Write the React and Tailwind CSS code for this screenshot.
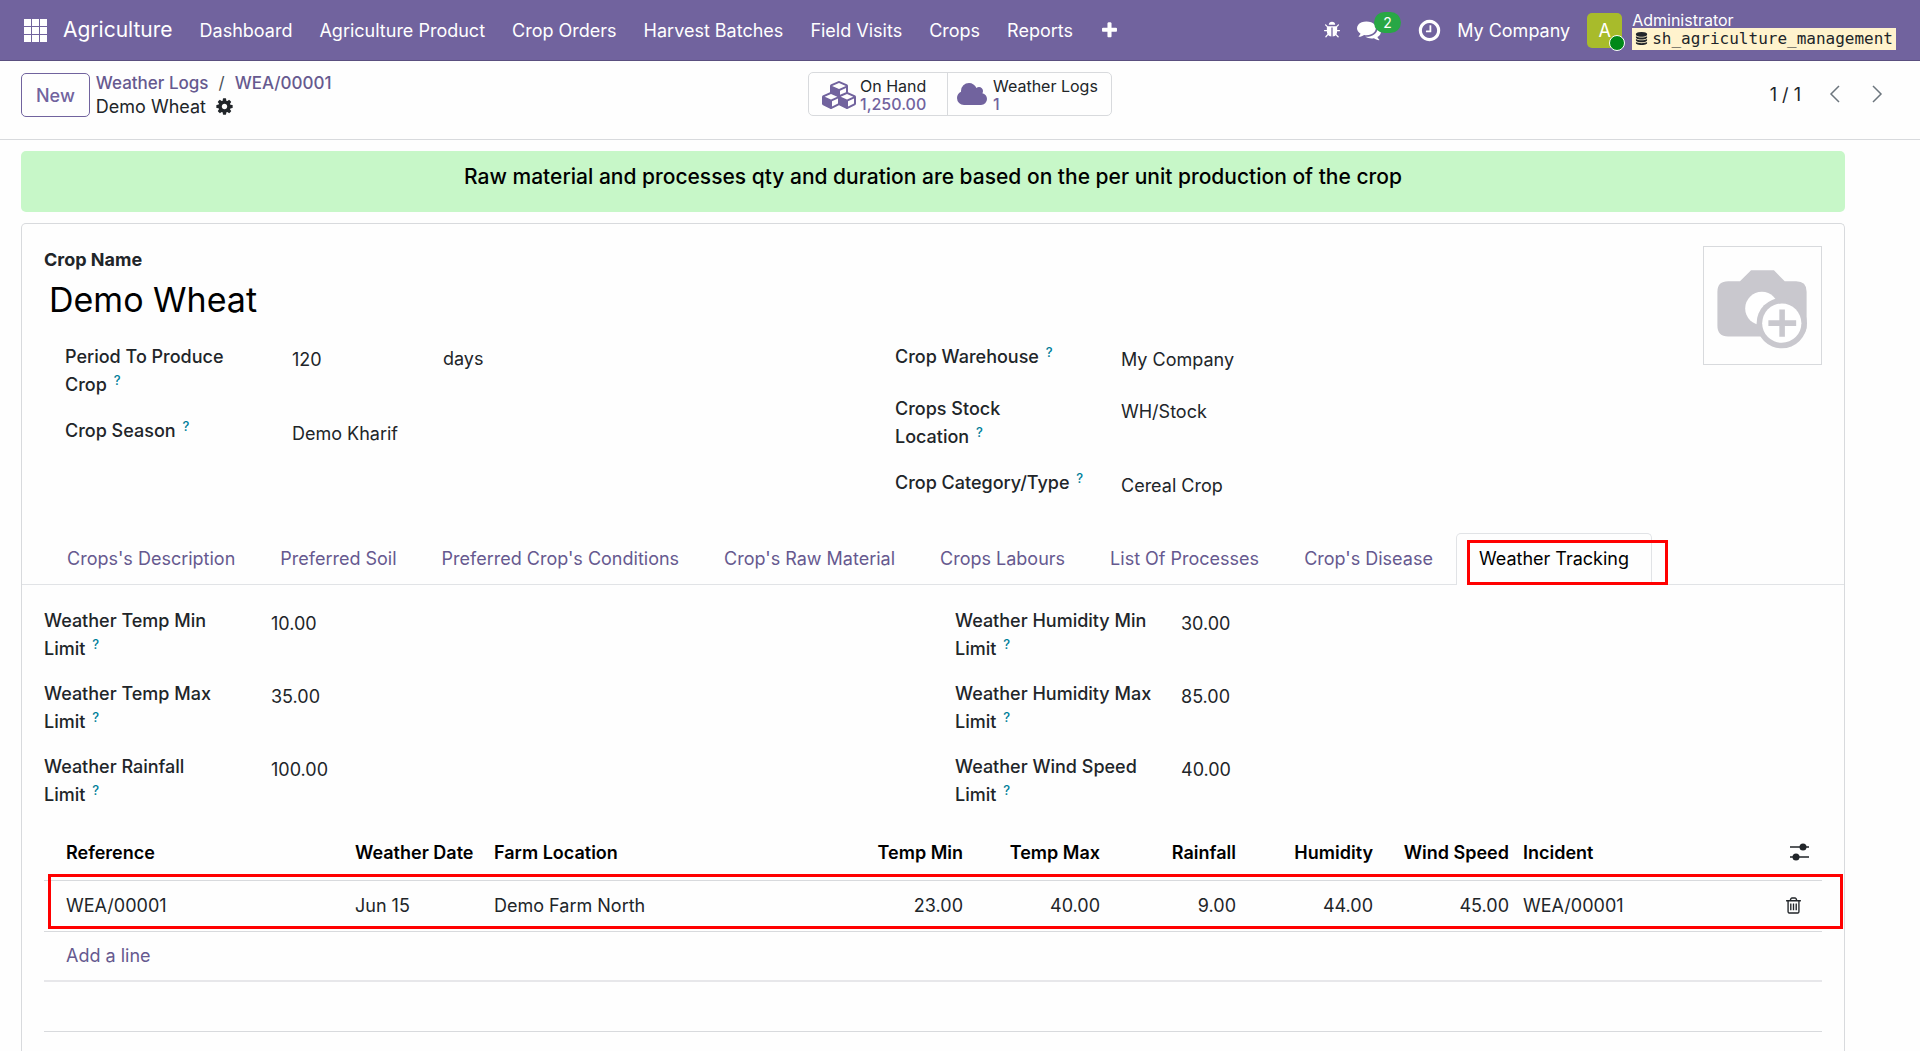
import React, { useState } from 'react';

const ICONS = {
  bug: [1792, "M1696 960q0 26-19 45t-45 19h-224q0 171-67 290l208 209q19 19 19 45t-19 45q-18 19-45 19t-45-19l-198-197q-5 5-15 13t-42 28.5-65 36.5-82 29-97 13v-896h-128v896q-51 0-101.5-13.5t-87-33-66-39-43.5-32.5l-15-14-183 207q-20 21-48 21-24 0-43-16-19-18-20.5-44.5t15.5-46.5l202-227q-58-114-58-274h-224q-26 0-45-19t-19-45 19-45 45-19h224v-294l-173-173q-19-19-19-45t19-45 45-19 45 19l173 173h844l173-173q19-19 45-19t45 19 19 45-19 45l-173 173v294h224q26 0 45 19t19 45zm-480-576h-640q0-133 93.5-226.5t226.5-93.5 226.5 93.5 93.5 226.5z"],
  comments: [1792, "M1408 768q0 139-94 257t-256.5 186.5-353.5 68.5q-86 0-176-16-124 88-278 128-36 9-86 16h-3q-11 0-20.5-8t-11.5-21q-1-3-1-6.5t.5-6.5 2-6l2.5-5 3.5-5.5 4-5 4.5-5 4-4.5q5-6 23-25t26-29.5 22.5-29 25-38.5 20.5-44q-124-72-195-177t-71-224q0-139 94-257t256.5-186.5 353.5-68.5 353.5 68.5 256.5 186.5 94 257zm384 256q0 120-71 224.5t-195 176.5q10 24 20.5 44t25 38.5 22.5 29 26 29.5 23 25q1 1 4 4.5t4.5 5 4 5 3.5 5.5l2.5 5 2 6 .5 6.5-1 6.5q-3 14-13 22t-22 7q-50-7-86-16-154-40-278-128-90 16-176 16-271 0-472-132 58 4 88 4 161 0 309-45t264-129q125-92 192-212t67-254q0-77-23-152 129 71 204 178t75 230z"],
  clock: [1792, "M1024 544v448q0 14-9 23t-23 9h-320q-14 0-23-9t-9-23v-64q0-14 9-23t23-9h224v-352q0-14 9-23t23-9h64q14 0 23 9t9 23zm416 352q0-148-73-273t-198-198-273-73-273 73-198 198-73 273 73 273 198 198 273 73 273-73 198-198 73-273zm224 0q0 209-103 385.5t-279.5 279.5-385.5 103-385.5-103-279.5-279.5-103-385.5 103-385.5 279.5-279.5 385.5-103 385.5 103 279.5 279.5 103 385.5z"],
  plus: [1792, "M1600 736v192q0 40-28 68t-68 28h-416v416q0 40-28 68t-68 28h-192q-40 0-68-28t-28-68v-416h-416q-40 0-68-28t-28-68v-192q0-40 28-68t68-28h416v-416q0-40 28-68t68-28h192q40 0 68 28t28 68v416h416q40 0 68 28t28 68z"],
  cog: [1792, "M1152 896q0-106-75-181t-181-75-181 75-75 181 75 181 181 75 181-75 75-181zm512-109v222q0 12-8 23t-20 13l-185 28q-19 54-39 91 35 50 107 138 10 12 10 25t-9 23q-27 37-99 108t-94 71q-12 0-26-9l-138-108q-44 23-91 38-16 136-29 186-7 28-36 28h-222q-14 0-24.5-8.5t-11.5-21.5l-28-184q-49-16-90-37l-141 107q-10 9-25 9-14 0-25-11-126-114-165-168-7-10-7-23 0-12 8-23 15-21 51-66.5t54-70.5q-27-50-41-99l-183-27q-13-2-21-12.5t-8-23.5v-222q0-12 8-23t19-13l186-28q14-46 39-92-40-57-107-138-10-12-10-24 0-10 9-23 26-36 98.5-107.5t94.5-71.5q13 0 26 10l138 107q44-23 91-38 16-136 29-186 7-28 36-28h222q14 0 24.5 8.5t11.5 21.5l28 184q49 16 90 37l142-107q9-9 24-9 13 0 25 10 129 119 165 170 7 8 7 22 0 12-8 23-15 21-51 66.5t-54 70.5q26 50 41 98l183 28q13 2 21 12.5t8 23.5z"],
  database: [1792, "M896 768q237 0 443-43t325-127v170q0 69-103 128t-280 93.5-385 34.5-385-34.5-280-93.5-103-128v-170q119 84 325 127t443 43zm0 768q237 0 443-43t325-127v170q0 69-103 128t-280 93.5-385 34.5-385-34.5-280-93.5-103-128v-170q119 84 325 127t443 43zm0-384q237 0 443-43t325-127v170q0 69-103 128t-280 93.5-385 34.5-385-34.5-280-93.5-103-128v-170q119 84 325 127t443 43zm0-1152q208 0 385 34.5t280 93.5 103 128v128q0 69-103 128t-280 93.5-385 34.5-385-34.5-280-93.5-103-128v-128q0-69 103-128t280-93.5 385-34.5z"],
  cubes: [2304, "M640 1632l384-192v-314l-384 164v342zm-64-454l404-173-404-173-404 173zm1088 454l384-192v-314l-384 164v342zm-64-454l404-173-404-173-404 173zm-448-293l384-165v-266l-384 164v267zm-64-379l441-189-441-189-441 189zm1088 518v416q0 36-19 67t-52 47l-448 224q-25 14-57 14t-57-14l-448-224q-4-2-7-4-2 2-7 4l-448 224q-25 14-57 14t-57-14l-448-224q-33-16-52-47t-19-67v-416q0-38 21.5-70t56.5-48l434-186v-400q0-38 21.5-70t56.5-48l448-192q23-10 50-10t50 10l448 192q35 16 56.5 48t21.5 70v400l434 186q36 16 57 48t21 70z"],
  cloud: [2048, "M1984 1152q0 159-112.5 271.5t-271.5 112.5h-1088q-185 0-316.5-131.5t-131.5-316.5q0-130 70-240t188-165q-2-28-2-43 0-212 150-362t362-150q158 0 286.5 88t187.5 230q70-62 166-62 106 0 181 75t75 181q0 75-41 138 129 30 213 134.5t84 239.5z"],
  trash: [1792, "M704 736v576q0 14-9 23t-23 9h-64q-14 0-23-9t-9-23v-576q0-14 9-23t23-9h64q14 0 23 9t9 23zm256 0v576q0 14-9 23t-23 9h-64q-14 0-23-9t-9-23v-576q0-14 9-23t23-9h64q14 0 23 9t9 23zm256 0v576q0 14-9 23t-23 9h-64q-14 0-23-9t-9-23v-576q0-14 9-23t23-9h64q14 0 23 9t9 23zm128 724v-948h-896v948q0 22 7 40.5t14.5 27 10.5 8.5h832q3 0 10.5-8.5t14.5-27 7-40.5zm-672-1076h448l-48-117q-7-9-17-11h-317q-10 2-17 11zm928 32v64q0 14-9 23t-23 9h-96v948q0 83-47 143.5t-113 60.5h-832q-66 0-113-58.5t-47-141.5v-952h-96q-14 0-23-9t-9-23v-64q0-14 9-23t23-9h309l70-167q15-37 54-63t79-26h320q40 0 79 26t54 63l70 167h309q14 0 23 9t9 23z"],
};

const Icon = ({ name, className }) => (
  <svg viewBox={`0 0 ${ICONS[name][0]} 1792`} fill="currentColor" className={className} aria-hidden="true">
    <path d={ICONS[name][1]} />
  </svg>
);

const menus = ['Dashboard', 'Agriculture Product', 'Crop Orders', 'Harvest Batches', 'Field Visits', 'Crops', 'Reports'];

const tabs = [
  "Crops's Description",
  'Preferred Soil',
  "Preferred Crop's Conditions",
  "Crop's Raw Material",
  'Crops Labours',
  'List Of Processes',
  "Crop's Disease",
  'Weather Tracking',
];

const limitsLeft = [
  { id: 'temp_min', label: 'Weather Temp Min Limit', value: '10.00' },
  { id: 'temp_max', label: 'Weather Temp Max Limit', value: '35.00' },
  { id: 'rainfall', label: 'Weather Rainfall Limit', value: '100.00' },
];

const limitsRight = [
  { id: 'humidity_min', label: 'Weather Humidity Min Limit', value: '30.00' },
  { id: 'humidity_max', label: 'Weather Humidity Max Limit', value: '85.00' },
  { id: 'wind', label: 'Weather Wind Speed Limit', value: '40.00' },
];

const logs = [
  {
    ref: 'WEA/00001',
    date: 'Jun 15',
    farm: 'Demo Farm North',
    numbers: ['23.00', '40.00', '9.00', '44.00', '45.00'],
    incident: 'WEA/00001',
  },
];

const Navbar = () => (
  <header className="flex h-[61px] items-center border-b border-[#5a4f7f] bg-[#71639e] px-6 text-white">
    <button type="button" aria-label="Home Menu" className="mr-4">
      <svg viewBox="0 0 23 23" fill="currentColor" className="h-[23px] w-[23px]">
        {[0, 8, 16].map((y) => [0, 8, 16].map((x) => <rect key={`${x}-${y}`} x={x} y={y} width="7" height="7" />))}
      </svg>
    </button>
    <a href="#app" className="mr-[27px] text-[21px]">Agriculture</a>
    <nav className="flex items-center gap-[27px]">
      {menus.map((m) => (
        <a key={m} href="#menu" className="whitespace-nowrap">{m}</a>
      ))}
      <button type="button" aria-label="More">
        <Icon name="plus" className="h-[19px] w-[19px]" />
      </button>
    </nav>

    <div className="ml-auto flex items-center">
      <button type="button" aria-label="Debug" className="mr-4">
        <Icon name="bug" className="h-[18px] w-[18px]" />
      </button>
      <button type="button" aria-label="Messages" className="relative mr-9">
        <Icon name="comments" className="h-6 w-6" />
        <span className="absolute -top-[6px] left-[17px] flex h-[21px] w-[27px] items-center justify-center rounded-full bg-[#28a745] text-[14px]">2</span>
      </button>
      <button type="button" aria-label="Activities" className="mr-[15px]">
        <Icon name="clock" className="h-[25px] w-[25px]" />
      </button>
      <button type="button" className="mr-[17px] whitespace-nowrap">My Company</button>
      <button type="button" className="flex items-center gap-[10px] text-left">
        <span className="relative flex h-[35px] w-[35px] items-center justify-center rounded-[5px] bg-[#a8bb2b] text-[18px]">
          A
          <span className="absolute -bottom-[3px] -right-[3px] h-4 w-4 rounded-full border border-white bg-[#008818]" />
        </span>
        <span className="flex flex-col pt-px">
          <span className="text-[16px] leading-[16px]">Administrator</span>
          <span className="flex h-[22px] items-center gap-1 bg-[#fff3cd] px-[3px] font-['DejaVu_Sans_Mono',monospace] text-[16px] text-[#212529]">
            <Icon name="database" className="h-[13px] w-[13px]" />
            sh_agriculture_management
          </span>
        </span>
      </button>
    </div>
  </header>
);

const ControlPanel = () => (
  <div className="grid h-[79px] grid-cols-[1fr_auto_1fr] items-start border-b border-[#d8dadd] px-[21px] pt-[11px]">
    <div className="flex items-center gap-[6px]">
      <button type="button" className="h-[44px] rounded-[5px] border border-[#71639e] px-[14px] font-medium text-[#71639e]">New</button>
      <div className="leading-[23px]">
        <div className="flex gap-[10px] text-[17px] font-medium text-[#66598f]">
          <a href="#logs">Weather Logs</a>
          <span className="font-normal text-[#495057]">/</span>
          <a href="#log">WEA/00001</a>
        </div>
        <div className="flex items-center gap-[9px]">
          Demo Wheat
          <button type="button" aria-label="Actions"><Icon name="cog" className="h-[19px] w-[19px]" /></button>
        </div>
      </div>
    </div>

    <div className="flex h-[44px] rounded-[5px] border border-[#d8dadd] text-left text-[16px] leading-[18px]">
      <button type="button" className="flex w-[139px] items-center gap-[2px] border-r border-[#d8dadd] pl-[13px] pt-[2px] text-left">
        <Icon name="cubes" className="h-[28px] w-[36px] text-[#71639e]" />
        <span>
          <span className="block">On Hand</span>
          <span className="block font-medium text-[#71639e]">1,250.00</span>
        </span>
      </button>
      <button type="button" className="flex w-[163px] items-center gap-[5px] pl-2 pt-[2px] text-left">
        <Icon name="cloud" className="h-[28px] w-8 text-[#71639e]" />
        <span className="whitespace-nowrap">
          <span className="block">Weather Logs</span>
          <span className="block font-medium text-[#71639e]">1</span>
        </span>
      </button>
    </div>

    <div className="flex h-[44px] items-center justify-end pr-4 text-[#6c757d]">
      <span className="mr-7 text-[#212529]">1 / 1</span>
      <button type="button" aria-label="Previous" className="mr-8">
        <svg viewBox="0 0 11 18" fill="none" stroke="currentColor" strokeWidth="1.5" className="h-[18px] w-[11px]"><path d="M10 1L2 9l8 8" /></svg>
      </button>
      <button type="button" aria-label="Next">
        <svg viewBox="0 0 11 18" fill="none" stroke="currentColor" strokeWidth="1.5" className="h-[18px] w-[11px]"><path d="M1 1l8 8-8 8" /></svg>
      </button>
    </div>
  </div>
);

const Field = ({ id, label, value, labelClass, children }) => (
  <div className="flex min-h-[34px] items-start">
    <label htmlFor={id} className={`shrink-0 font-medium leading-[28px] ${labelClass}`}>
      {label} <sup className="top-[-6px] ml-[2px] text-[13px] leading-none text-[#017e9a]">?</sup>
    </label>
    <input
      id={id}
      defaultValue={value}
      className={`h-[32px] bg-transparent outline-none ${children ? 'w-[151px]' : 'min-w-0 flex-1'}`}
    />
    {children}
  </div>
);

const PhotoPlaceholder = () => (
  <button type="button" aria-label="Upload photo" className="block h-[119px] w-[119px] border border-[#d8dadd]">
    <svg viewBox="130 76 358 358" className="h-full w-full">
      <path fill="#c9c8ce" d="M204 181h36l34-34h70l33 34h35q32 0 32 32v104q0 33-32 33H204q-33 0-33-33V213q0-32 33-32z" />
      <circle cx="307" cy="264" r="51" fill="#fff" />
      <circle cx="368" cy="309" r="77" fill="#c9c8ce" />
      <circle cx="368" cy="309" r="60" fill="#fff" />
      <path stroke="#c9c8ce" strokeWidth="17" d="M327 309h85M369 267v84" />
    </svg>
  </button>
);

const WeatherTable = () => (
  <table className="w-full table-fixed border-collapse text-left">
    <colgroup>
      <col className="w-[304px]" />
      <col className="w-[139px]" />
      <col />
      <col className="w-[137px]" />
      <col className="w-[137px]" />
      <col className="w-[136px]" />
      <col className="w-[137px]" />
      <col className="w-[136px]" />
      <col className="w-[246px]" />
      <col className="w-[60px]" />
    </colgroup>
    <thead>
      <tr className="h-[54px] border-b border-[#d8dadd] text-black">
        <th className="pl-[22px] font-semibold">Reference</th>
        <th className="whitespace-nowrap px-[7px] font-semibold">Weather Date</th>
        <th className="px-[7px] font-semibold">Farm Location</th>
        {['Temp Min', 'Temp Max', 'Rainfall', 'Humidity', 'Wind Speed'].map((h) => (
          <th key={h} className="whitespace-nowrap px-[7px] text-right font-semibold">{h}</th>
        ))}
        <th className="px-[7px] font-semibold">Incident</th>
        <th className="pl-7">
          <button type="button" aria-label="Optional columns" className="block">
            <svg viewBox="0 0 19 19" fill="currentColor" className="h-[19px] w-[19px] text-[#212529]">
              <path stroke="currentColor" strokeWidth="1.5" d="M0 4h19M0 14h19" />
              <circle cx="13" cy="4" r="3.5" />
              <circle cx="6" cy="14" r="3.5" />
            </svg>
          </button>
        </th>
      </tr>
    </thead>
    <tbody>
      {logs.map((l) => (
        <tr key={l.ref} className="relative h-[51px] border-b border-[#d8dadd]">
          <td className="pl-[22px]">
            {l.ref}
            <span className="pointer-events-none absolute -top-[6px] bottom-[1px] left-1 -right-[21px] border-3 border-[#ff0000]" />
          </td>
          <td className="px-[7px]">{l.date}</td>
          <td className="px-[7px]">{l.farm}</td>
          {l.numbers.map((n, i) => (
            <td key={i} className="px-[7px] text-right">{n}</td>
          ))}
          <td className="px-[7px]">{l.incident}</td>
          <td className="pl-[22px]">
            <button type="button" aria-label="Delete row" className="block">
              <Icon name="trash" className="h-[19px] w-[19px]" />
            </button>
          </td>
        </tr>
      ))}
      <tr className="h-[50px] border-b-2 border-[#e7e7ea]">
        <td colSpan={10} className="pl-[22px]">
          <a href="#add" className="text-[#66598f]">Add a line</a>
        </td>
      </tr>
      <tr className="h-[50px] border-b border-[#d8dadd]">
        <td colSpan={10} />
      </tr>
    </tbody>
  </table>
);

export default function App() {
  const [active, setActive] = useState('Weather Tracking');

  return (
    <div className="flex min-h-screen flex-col bg-[#fefefe] font-[Inter,sans-serif] text-[18px] text-[#212529]">
      <Navbar />
      <ControlPanel />

      <main className="flex flex-1 flex-col pl-[21px] pr-[75px] pt-[11px]">
        <div className="mb-[11px] h-[61px] rounded-[5px] bg-[#c7f7c8] pt-[11px] text-center text-[21px] font-medium leading-[30px] text-black">
          Raw material and processes qty and duration are based on the per unit production of the crop
        </div>

        <div className="flex-1 rounded-t-[5px] border border-b-0 border-[#d8dadd]">
          {/* Title and photo */}
          <div className="flex items-start justify-between px-[22px] pt-[22px]">
            <div>
              <label htmlFor="crop_name" className="block font-bold leading-[28px]">Crop Name</label>
              <input
                id="crop_name"
                defaultValue="Demo Wheat"
                className="block h-[50px] w-[800px] bg-transparent pl-[5px] text-[34px] text-black outline-none"
              />
            </div>
            <div className="-mb-10">
              <PhotoPlaceholder />
            </div>
          </div>

          {/* Main fields */}
          <div className="grid grid-cols-[830px_1fr] items-start pl-[43px] pt-[18px]">
            <div className="grid gap-[18px]">
              <Field id="period" label="Period To Produce Crop" value="120" labelClass="w-[227px] pr-[50px]">
                <span className="leading-[32px]">days</span>
              </Field>
              <Field id="season" label="Crop Season" value="Demo Kharif" labelClass="w-[227px]" />
            </div>
            <div className="grid gap-[18px]">
              <Field id="warehouse" label="Crop Warehouse" value="My Company" labelClass="w-[226px]" />
              <Field id="location" label="Crops Stock Location" value="WH/Stock" labelClass="w-[226px] pr-[60px]" />
              <Field id="category" label="Crop Category/Type" value="Cereal Crop" labelClass="w-[226px]" />
            </div>
          </div>

          {/* Notebook */}
          <div role="tablist" className="mt-[30px] flex gap-px border-b border-[#e1e3e6] pl-[23px]">
            {tabs.map((t) => (
              <button
                key={t}
                type="button"
                role="tab"
                aria-selected={t === active}
                onClick={() => setActive(t)}
                className={
                  t === active
                    ? 'relative -mb-px h-[52px] whitespace-nowrap rounded-t-[5px] border border-b-0 border-[#e1e3e6] bg-[#fefefe] px-[22px] pb-[2px] text-black'
                    : 'h-[51px] whitespace-nowrap px-[22px] text-[#66598f]'
                }
              >
                {t}
                {t === 'Weather Tracking' && (
                  <span className="pointer-events-none absolute -right-[17px] bottom-0 left-[10px] top-[6px] border-3 border-[#ff0000]" />
                )}
              </button>
            ))}
          </div>

          <div className="px-[22px] pt-[22px]">
            <div className="grid grid-cols-[911px_1fr]">
              <div className="grid gap-[17px]">
                {limitsLeft.map((f) => (
                  <Field key={f.id} {...f} labelClass="w-[227px] pr-[50px]" />
                ))}
              </div>
              <div className="grid gap-[17px]">
                {limitsRight.map((f) => (
                  <Field key={f.id} {...f} labelClass="w-[226px] pr-[20px]" />
                ))}
              </div>
            </div>
            <div className="mt-[17px]">
              <WeatherTable />
            </div>
          </div>
        </div>
      </main>
    </div>
  );
}
